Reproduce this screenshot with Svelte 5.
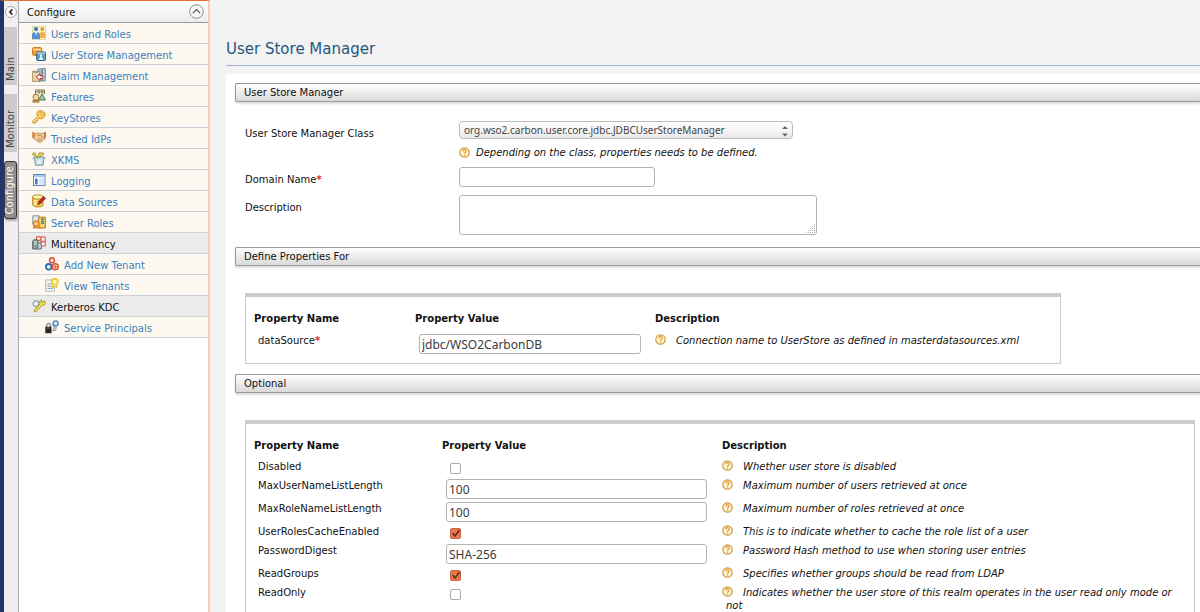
<script>
  const tabs = [
    { label: 'Main', active: false },
    { label: 'Monitor', active: false },
    { label: 'Configure', active: true }
  ];

  const menu = [
    { label: 'Users and Roles', icon: 'users' },
    { label: 'User Store Management', icon: 'store' },
    { label: 'Claim Management', icon: 'claim' },
    { label: 'Features', icon: 'features' },
    { label: 'KeyStores', icon: 'key' },
    { label: 'Trusted IdPs', icon: 'hands' },
    { label: 'XKMS', icon: 'xkms' },
    { label: 'Logging', icon: 'logging' },
    { label: 'Data Sources', icon: 'data' },
    { label: 'Server Roles', icon: 'roles' },
    { label: 'Multitenancy', icon: 'multi', group: true },
    { label: 'Add New Tenant', icon: 'addTenant', child: true },
    { label: 'View Tenants', icon: 'viewTenants', child: true },
    { label: 'Kerberos KDC', icon: 'kerberos', group: true },
    { label: 'Service Principals', icon: 'principals', child: true }
  ];

  const optional = [
    { name: 'Disabled', type: 'check', value: false, text: 'Whether user store is disabled' },
    { name: 'MaxUserNameListLength', type: 'text', value: '100', text: 'Maximum number of users retrieved at once' },
    { name: 'MaxRoleNameListLength', type: 'text', value: '100', text: 'Maximum number of roles retrieved at once' },
    { name: 'UserRolesCacheEnabled', type: 'check', value: true, text: 'This is to indicate whether to cache the role list of a user' },
    { name: 'PasswordDigest', type: 'text', value: 'SHA-256', text: 'Password Hash method to use when storing user entries' },
    { name: 'ReadGroups', type: 'check', value: true, text: 'Specifies whether groups should be read from LDAP' },
    { name: 'ReadOnly', type: 'check', value: false, text: 'Indicates whether the user store of this realm operates in the user read only mode or not' }
  ];
</script>

{#snippet help()}
  <svg class="help" viewBox="0 0 11 11" aria-hidden="true">
    <circle cx="5.5" cy="5.5" r="4.7" fill="#fff6d8" stroke="#c99a3c" stroke-width="1.2" />
    <path d="M3.7 4.4C3.8 2.2 7.3 2.2 7.2 4.3C7.1 5.5 5.5 5.3 5.5 6.7" fill="none" stroke="#ee9a35" stroke-width="1.3" />
    <rect x="4.8" y="7.5" width="1.4" height="1.3" fill="#ee9a35" />
  </svg>
{/snippet}

{#snippet menuIcon(name)}
  <svg class="icon" viewBox="0 0 14 14" aria-hidden="true">
    {#if name === 'users'}
      <rect x=".5" y=".5" width="13" height="13" fill="#f6f3d2" stroke="#d5dca8" />
      <circle cx="4" cy="3" r="2.1" fill="#4478b8" />
      <circle cx="10.3" cy="3.1" r="1.8" fill="#e28a2e" />
      <path d="M0 13V9Q0 6 4 6T8 9V13Z" fill="#5c8fd0" />
      <path d="M3 6L4 10L5 6Z" fill="#fff" />
      <path d="M8 12V8Q8 5.5 10.5 5.5T13.5 8V12Z" fill="#f4ae4e" />
    {:else if name === 'store'}
      <rect x=".7" y=".7" width="9" height="7.6" rx="1" fill="#f5a23b" stroke="#ce6a12" />
      <path d="M1 2.5H9" stroke="#ffdca0" stroke-width="1.4" />
      <rect x="4.7" y="5" width="8.8" height="8.5" rx="1" fill="#5b9bbd" stroke="#286a91" />
      <path d="M5 6.2H13" stroke="#d8edf5" />
      <circle cx="9" cy="8.6" r="1.2" fill="#fff" />
      <path d="M6.6 12.8L9 9L11.4 12.8Z" fill="#fff" />
    {:else if name === 'claim'}
      <path d="M6 1L13.3 .6V12.8L6 13.3Z" fill="#b6cbd5" stroke="#718c9c" />
      <path d="M10 1V13" stroke="#6e9ab5" stroke-width="2" />
      <rect x=".7" y="3.3" width="7" height="10" fill="#eed9ae" stroke="#a98f61" />
      <path d="M2 3H6V5H2Z" fill="#979b8f" />
      <path d="M4 9L8 6V8H11V10.5H8V12.5Z" fill="#fff" stroke="#b72f34" />
    {:else if name === 'features'}
      <path d="M3.5 6V1H12.5V5M3.5 3H12.5M7 1V5M10 1V4" fill="none" stroke="#827249" />
      <circle cx="4" cy="8.2" r="3" fill="#f2d8a2" stroke="#ab7832" />
      <path d="M10 4.5L13.4 11H7Z" fill="#9dcb9e" stroke="#3d7e5e" />
      <path d="M.8 11.5H7V13.2H.8Z" fill="#d6a958" stroke="#7d5c2b" stroke-width=".7" />
    {:else if name === 'key'}
      <path d="M6 1.2L9.5 .5L13.3 3.5L12.6 7L9 9L7 8.1L5.9 9.2L5.5 11L4 11.2L3.5 13L1 13.2L.6 11.4L5.3 6.4L4.8 3.5Z" fill="#f9c94e" stroke="#cf8b22" stroke-width=".9" />
      <path d="M1.5 11.6L6.6 6.6" stroke="#fff0a6" />
      <circle cx="10.3" cy="3.5" r="1.2" fill="#fff" stroke="#b97917" stroke-width=".7" />
    {:else if name === 'hands'}
      <path d="M0 1L3 2.5L6 2L9 2.4L11.5 2L13.8 1V7L11 9.3L8.2 11.6L5.5 10.5L2 7.3L0 6.5Z" fill="#f1cf9c" stroke="#b3814c" stroke-width=".8" />
      <path d="M3 3L2 7M5 5L8 4L11.8 7.3M5.2 8L8 10.3M7 7L10 9.4" fill="none" stroke="#9a6b3d" stroke-width=".8" />
      <path d="M0 1L2.8 2L1.7 6.8L0 6.4Z" fill="#e9904e" />
      <path d="M11.8 1.8L13.8 1V6.7L12 7Z" fill="#d47d43" />
    {:else if name === 'xkms'}
      <path d="M2.5 5H12L11 13.2H3.4Z" fill="#c8dfe6" stroke="#6d96a5" />
      <path d="M2.2 5L.5 7M12 5L13.5 6.6" stroke="#6d96a5" />
      <path d="M6 6L1.8 1.5M5 6L7.4 .8L12 1.5L9 4Z" fill="#f5dd58" stroke="#9b8d20" />
      <circle cx="2.2" cy="2.2" r="1.5" fill="#ebd545" stroke="#9b8d20" stroke-width=".8" />
      <path d="M5 9H9M5 11H9" stroke="#fff" />
    {:else if name === 'logging'}
      <rect x="1.5" y="1.5" width="11.5" height="11" fill="#f8fbff" stroke="#6286bd" />
      <rect x="2" y="2" width="10.5" height="2.2" fill="#a8c6ed" />
      <rect x="3" y="5.6" width="2.6" height="5.8" fill="#447cc3" />
      <rect x="7" y="5.6" width="4.6" height="5.8" fill="#d6e3f5" />
    {:else if name === 'data'}
      <path d="M.7 3V11Q1 13 6 13T11 11V3Z" fill="#f1cd5c" stroke="#b48a25" />
      <ellipse cx="5.9" cy="3" rx="5.2" ry="2.1" fill="#fff1ae" stroke="#b48a25" />
      <path d="M3 6V11" stroke="#fff3bb" stroke-width="1.5" />
      <path d="M11.6 2.4L13.6 4.2L8.5 9.6L5.8 10.6L6.6 7.6Z" fill="#c52e23" stroke="#711e1a" stroke-width=".7" />
    {:else if name === 'roles'}
      <path d="M.8 .8H7V9H.8Z" fill="#dfe7ec" stroke="#8297a3" />
      <path d="M6.5 2.2H13.3V13H6.5Z" fill="#f6d568" stroke="#9d7b28" />
      <path d="M9 4.2H12M9 6.2H12M9 8.2H12" stroke="#43688f" stroke-width="1.2" />
      <circle cx="4.2" cy="9" r="3.2" fill="#f5ab59" stroke="#dd7120" />
      <path d="M1 12.8Q4.8 8.2 8.5 12.8Z" fill="#f8b352" stroke="#d46c19" />
      <circle cx="4.2" cy="8.8" r="1.1" fill="#fff0d2" />
    {:else if name === 'multi'}
      <path d="M4.5 .7H8.3V4.5H4.5ZM9 .9H13.3V5.4H9ZM8.4 5.8H13.3V10H8.4Z" fill="#fbeae2" stroke="#d9583f" />
      <path d="M.6 5L2 3.8H6V13H.6Z" fill="#8b9990" stroke="#5c6f68" />
      <path d="M2 6H5M2 8H5" stroke="#e5eee7" />
      <path d="M5.8 7H9.3V13H5.8Z" fill="#b9d3de" stroke="#557987" />
    {:else if name === 'addTenant'}
      <circle cx="7" cy="3.2" r="2.4" fill="#fff" stroke="#db5745" stroke-width="1.7" />
      <circle cx="3.7" cy="9.8" r="2.8" fill="#e8f2fb" stroke="#2f6ba5" stroke-width="1.8" />
      <circle cx="10.3" cy="9.8" r="3" fill="#fff" stroke="#d75031" stroke-width="1.5" />
      <path d="M10.3 7.9V11.7M8.4 9.8H12.2" stroke="#e77b38" stroke-width="1.5" />
    {:else if name === 'viewTenants'}
      <path d="M.6 2H9.5V13.3H.6Z" fill="#f6f7f2" stroke="#b6b9b2" />
      <path d="M2.3 6H6M2.3 8.2H8M2.3 10.4H8" stroke="#87a7c5" />
      <circle cx="9.8" cy="3.8" r="3" fill="#fff9bd" stroke="#efcb1c" stroke-width="1.7" />
      <path d="M7.8 6.5L7 9.7L9.8 8.5L12 9.8L11.8 6.4" fill="#f8e065" stroke="#d7ae25" stroke-width=".6" />
    {:else if name === 'kerberos'}
      <circle cx="4" cy="4.7" r="3" fill="#d7e0e2" stroke="#83989d" stroke-width="1.4" stroke-dasharray="1.5 .8" />
      <circle cx="4" cy="4.7" r="1.1" fill="#fff" />
      <path d="M8 5L7.6 2.2L9.3 .7L9.7 3L11.4 3.4L12.2 1.6L13.5 3.6L12.2 6L9.8 6.6L4.4 12.6L2.7 12.9L2.2 11.2Z" fill="#f1e04d" stroke="#928824" stroke-width=".8" />
    {:else if name === 'principals'}
      <path d="M1.7 7V5Q3.5 1.6 5.3 5V7" fill="none" stroke="#81878b" stroke-width="1.3" />
      <rect x=".3" y="6.7" width="6.2" height="6.5" fill="#262729" />
      <path d="M1.5 8H5" stroke="#777" />
      <path d="M5.5 3L8 5L9 8L7.5 11L10.5 10.5L11.5 7.5L9.5 5.5" fill="#c2c8cb" stroke="#8d9396" stroke-width=".7" />
      <circle cx="10.7" cy="3.4" r="2.4" fill="#e9f4fc" stroke="#4f8fbe" stroke-width="1.5" />
    {/if}
  </svg>
{/snippet}

{#snippet description(text)}
  {@render help()}<em>{text}</em>
{/snippet}

<div class="page">
  <nav class="tabs" aria-label="Sections">
    <button class="collapse" aria-label="Collapse menu">
      <svg viewBox="0 0 12 12"><circle cx="6" cy="6" r="5.5" fill="#fafafa" stroke="#aaa" /><path d="M7.4 3.4L4.8 6L7.4 8.6" fill="none" stroke="#222" stroke-width="1.5" /></svg>
    </button>
    {#each tabs as tab}
      <button class="tab" class:active={tab.active}><span>{tab.label}</span></button>
    {/each}
  </nav>

  <aside>
    <div class="menu-head">
      <span>Configure</span>
      <button aria-label="Fold section">
        <svg viewBox="0 0 15 15"><circle cx="7.5" cy="7.5" r="6.8" fill="#f7f7f7" stroke="#8c8c8c" /><path d="M3.8 9.2L7.5 5.5L11.2 9.2" fill="none" stroke="#555" stroke-width="1.2" /></svg>
      </button>
    </div>
    <ul>
      {#each menu as item}
        <li class:group={item.group} class:child={item.child}>
          {@render menuIcon(item.icon)}
          {#if item.group}<span>{item.label}</span>{:else}<a href="#top">{item.label}</a>{/if}
        </li>
      {/each}
    </ul>
  </aside>

  <main>
    <h1>User Store Manager</h1>
    <form class="panel">
      <h2>User Store Manager</h2>
      <div class="fields">
        <label for="cls">User Store Manager Class</label>
        <div class="class-field">
          <div class="select">
            <select id="cls"><option>org.wso2.carbon.user.core.jdbc.JDBCUserStoreManager</option></select>
            <svg viewBox="0 0 6 12" aria-hidden="true"><path d="M0 4L3 1L6 4ZM0 8.5L3 11.5L6 8.5Z" fill="#666" /></svg>
          </div>
          <p>{@render description('Depending on the class, properties needs to be defined.')}</p>
        </div>
        <label for="domain">Domain Name<b>*</b></label>
        <input id="domain" class="domain" type="text" />
        <label for="desc">Description</label>
        <textarea id="desc"></textarea>
      </div>

      <h2>Define Properties For</h2>
      <div class="box required">
        <table>
          <thead><tr><th class="name">Property Name</th><th class="value">Property Value</th><th>Description</th></tr></thead>
          <tbody>
            <tr>
              <td><label for="ds">dataSource<b>*</b></label></td>
              <td><input id="ds" type="text" value="jdbc/WSO2CarbonDB" /></td>
              <td class="about">{@render description('Connection name to UserStore as defined in masterdatasources.xml')}</td>
            </tr>
          </tbody>
        </table>
      </div>

      <h2>Optional</h2>
      <div class="box optional">
        <table>
          <thead><tr><th class="name">Property Name</th><th class="value">Property Value</th><th>Description</th></tr></thead>
          <tbody>
            {#each optional as row}
              <tr class:short={row.type === 'check'}>
                <td><label for={row.name}>{row.name}</label></td>
                <td>
                  {#if row.type === 'check'}
                    <input id={row.name} type="checkbox" checked={row.value} />
                  {:else}
                    <input id={row.name} type="text" value={row.value} />
                  {/if}
                </td>
                <td class="about">{@render description(row.text)}</td>
              </tr>
            {/each}
            <tr><td></td><td></td><td class="about">{@render help()}</td></tr>
          </tbody>
        </table>
      </div>
    </form>
  </main>
</div>

<style>
  :global(body) { background: #f3f3f3; }
  * { box-sizing: border-box; }
  .page {
    display: flex;
    height: 100vh;
    overflow: hidden;
    font: 10px/13px "DejaVu Sans", sans-serif;
    color: #111;
  }
  button { border: 0; padding: 0; background: none; font: inherit; color: inherit; }
  svg { display: block; flex: none; }

  .tabs {
    flex: none;
    width: 18px;
    border-left: 4px solid #20356c;
    border-top: 1px solid #e4702e;
    background: #efefef;
    display: flex;
    flex-direction: column;
    gap: 9px;
  }
  .collapse { height: 17px; padding-top: 5px; margin-left: 1px; }
  .collapse svg { width: 12px; height: 12px; }
  .tab {
    width: 13px;
    height: 58px;
    background: #ccc;
    color: #444;
    writing-mode: vertical-rl;
    text-align: right;
    padding-bottom: 4px;
  }
  .tab span { display: inline-block; transform: rotate(180deg); }
  .tab.active {
    background: #8f8f8f;
    color: #fff;
    border: 1px solid #333;
    border-radius: 3px;
    box-shadow: 1px 2px 2px #aaa;
  }

  aside {
    flex: none;
    width: 192px;
    background: #fff;
    border-left: 1px solid #aaa;
    border-right: 2px solid #f9cbb3;
    border-top: 1px solid #e4702e;
  }
  .menu-head {
    height: 22px;
    padding: 0 4px 0 8px;
    display: flex;
    align-items: center;
    justify-content: space-between;
    background: linear-gradient(#fff, #ececec);
    border-bottom: 1px solid #999;
  }
  .menu-head span { padding-top: 2px; }
  .menu-head svg { width: 15px; height: 15px; }
  ul { margin: 0; padding: 0; list-style: none; }
  li {
    height: 21px;
    padding: 0 0 1px 13px;
    display: flex;
    align-items: center;
    gap: 5px;
    background: #fdf8f0;
    border-bottom: 1px solid #ced3da;
  }
  li.child { padding-left: 26px; }
  li.group { background: #ebebeb; }
  li a, li span { padding-top: 3px; }
  .icon { width: 14px; height: 14px; }
  a { color: #3a80bd; text-decoration: none; }

  main { flex: 1; min-width: 0; padding-left: 16px; }
  h1 {
    margin: 0;
    padding: 39px 0 5px;
    font: 15px/21px "DejaVu Sans", sans-serif;
    color: #1e5780;
    border-bottom: 1px solid #9fb0c9;
  }
  .panel { margin-top: 8px; padding: 9px 0 0 9px; background: #fff; }
  h2 {
    margin: 0;
    height: 19px;
    padding-left: 8px;
    font: 10px/18px "DejaVu Sans", sans-serif;
    border: 1px solid #999;
    border-right: 0;
    border-radius: 2px 0 0 2px;
    background: linear-gradient(#fff, #d9d9d9);
    box-shadow: 0 2px 2px #ddd;
  }
  .fields {
    display: grid;
    grid-template-columns: 214px 1fr;
    padding: 19px 0 12px 10px;
    row-gap: 8px;
    justify-items: start;
  }
  .fields label { padding-top: 6px; }
  b { color: #f0202a; }
  .class-field { height: 38px; }
  .select { position: relative; width: 334px; }
  .select svg { position: absolute; right: 5px; top: 4px; width: 6px; height: 12px; }
  select {
    appearance: none;
    display: block;
    width: 100%;
    height: 18px;
    padding: 0 16px 0 4px;
    border: 1px solid #bbb;
    border-radius: 4px;
    background: linear-gradient(#fff, #eaeaea);
    font: 10px/14px "Noto Sans", sans-serif;
    color: #444;
  }
  p { margin: 7px 0 0; display: flex; align-items: center; gap: 6px; }
  input[type='text'], textarea {
    display: block;
    border: 1px solid #b5b3ae;
    border-radius: 3px;
    background: #fff;
    padding: 0 2px;
    font: 12px/17px "Noto Sans", sans-serif;
    color: #3a3a3a;
  }
  input.domain { width: 196px; height: 20px; }
  textarea { width: 358px; height: 40px; }
  textarea::-webkit-resizer {
    background: url("data:image/svg+xml,%3Csvg xmlns='http://www.w3.org/2000/svg' viewBox='0 0 15 15'%3E%3Cpath d='M13 5h1v1h-1zM11 7h1v1h-1zM13 7h1v1h-1zM9 9h1v1h-1zM11 9h1v1h-1zM13 9h1v1h-1zM7 11h1v1h-1zM9 11h1v1h-1zM11 11h1v1h-1zM13 11h1v1h-1zM5 13h1v1h-1zM7 13h1v1h-1zM9 13h1v1h-1zM11 13h1v1h-1zM13 13h1v1h-1z' fill='%23aaa'/%3E%3C/svg%3E");
  }
  .help { width: 11px; height: 11px; }

  .box { border: 1px solid #ccc; border-top: 4px solid #ccc; margin: 27px 5px 10px 10px; }
  .required { width: 816px; height: 71px; }
  .optional { margin-bottom: 0; }
  table { width: 100%; table-layout: fixed; border-collapse: collapse; }
  th { text-align: left; padding: 15px 0 6px; }
  th:first-child, td:first-child { padding-left: 8px; }
  .required th { padding-bottom: 7px; }
  .required .name { width: 169px; }
  .required .value { width: 240px; }
  .optional .name { width: 196px; }
  .optional .value { width: 280px; }
  td { padding: 2px 4px 0; vertical-align: top; height: 23px; }
  tr.short td { height: 19px; }
  td label { padding-left: 4px; }
  td input[type='text'] { width: 261px; height: 20px; }
  .required td input[type='text'] { width: 222px; }
  td .help { float: left; margin: 0 10px 0 -4px; }
  input[type='checkbox'] {
    appearance: none;
    display: block;
    width: 11px;
    height: 11px;
    margin: 3px 0 0 4px;
    border: 1px solid #aaa;
    border-radius: 2px;
    background: #fff;
  }
  input[type='checkbox']:checked {
    border-color: #c2674a;
    background: #f0764a url("data:image/svg+xml,%3Csvg xmlns='http://www.w3.org/2000/svg' viewBox='0 0 9 9'%3E%3Cpath d='M1.5 4L4 7L8.5 1' fill='none' stroke='%23553022' stroke-width='1.6'/%3E%3C/svg%3E");
  }
</style>
